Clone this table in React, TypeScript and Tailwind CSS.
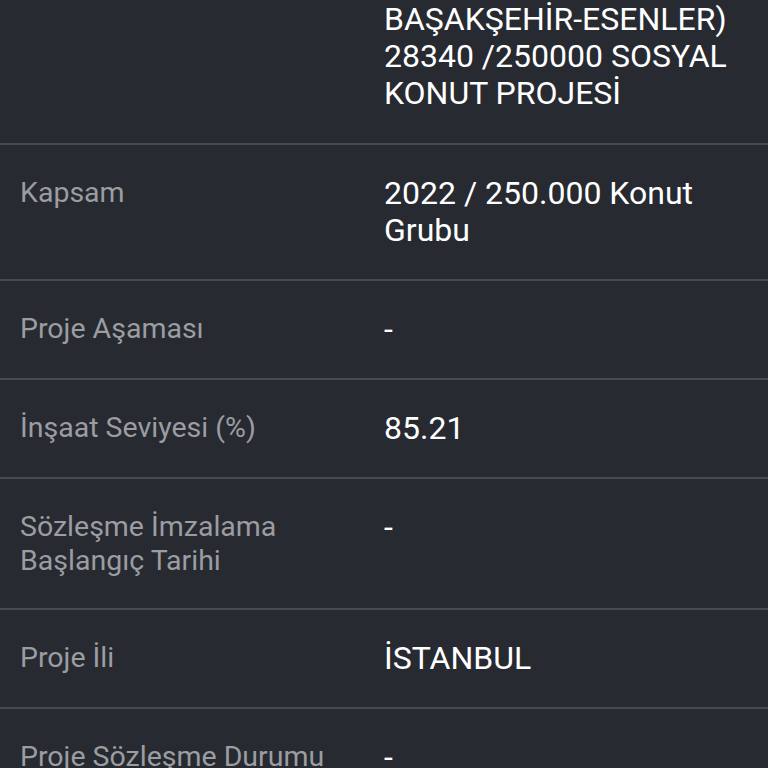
const ROWS = [
  { label: 'Kapsam', value: '2022 / 250.000 Konut Grubu' },
  { label: 'Proje Aşaması', value: '-' },
  { label: 'İnşaat Seviyesi (%)', value: '85.21' },
  { label: 'Sözleşme İmzalama Başlangıç Tarihi', value: '-' },
  { label: 'Proje İli', value: 'İSTANBUL' },
  { label: 'Proje Sözleşme Durumu', value: '-' },
]

export default function App() {
  return (
    <div className="h-[768px] overflow-hidden bg-[#272a31] font-['Roboto',sans-serif]">
      {/* first row is cut off by the scroll */}
      <div className="flex border-b-2 border-[#474a51] px-[21px] pt-[1px] pb-[31px]">
        <div className="w-[363px]" />
        <div className="flex-1 text-[32px] leading-[37px] text-white">
          BAŞAKŞEHİR-ESENLER)
          <br />
          28340 /250000 SOSYAL KONUT PROJESİ
        </div>
      </div>
      {ROWS.map(r => (
        <div key={r.label} className="flex border-b-2 border-[#474a51] pl-[20px] pr-[21px] py-[30px]">
          <div className="w-[364px] pr-6 text-[28.5px] leading-[34px] pt-[1px] text-[#9b9da1]">{r.label}</div>
          <div className="flex-1 text-[32px] leading-[37px] text-white">{r.value}</div>
        </div>
      ))}
    </div>
  )
}
